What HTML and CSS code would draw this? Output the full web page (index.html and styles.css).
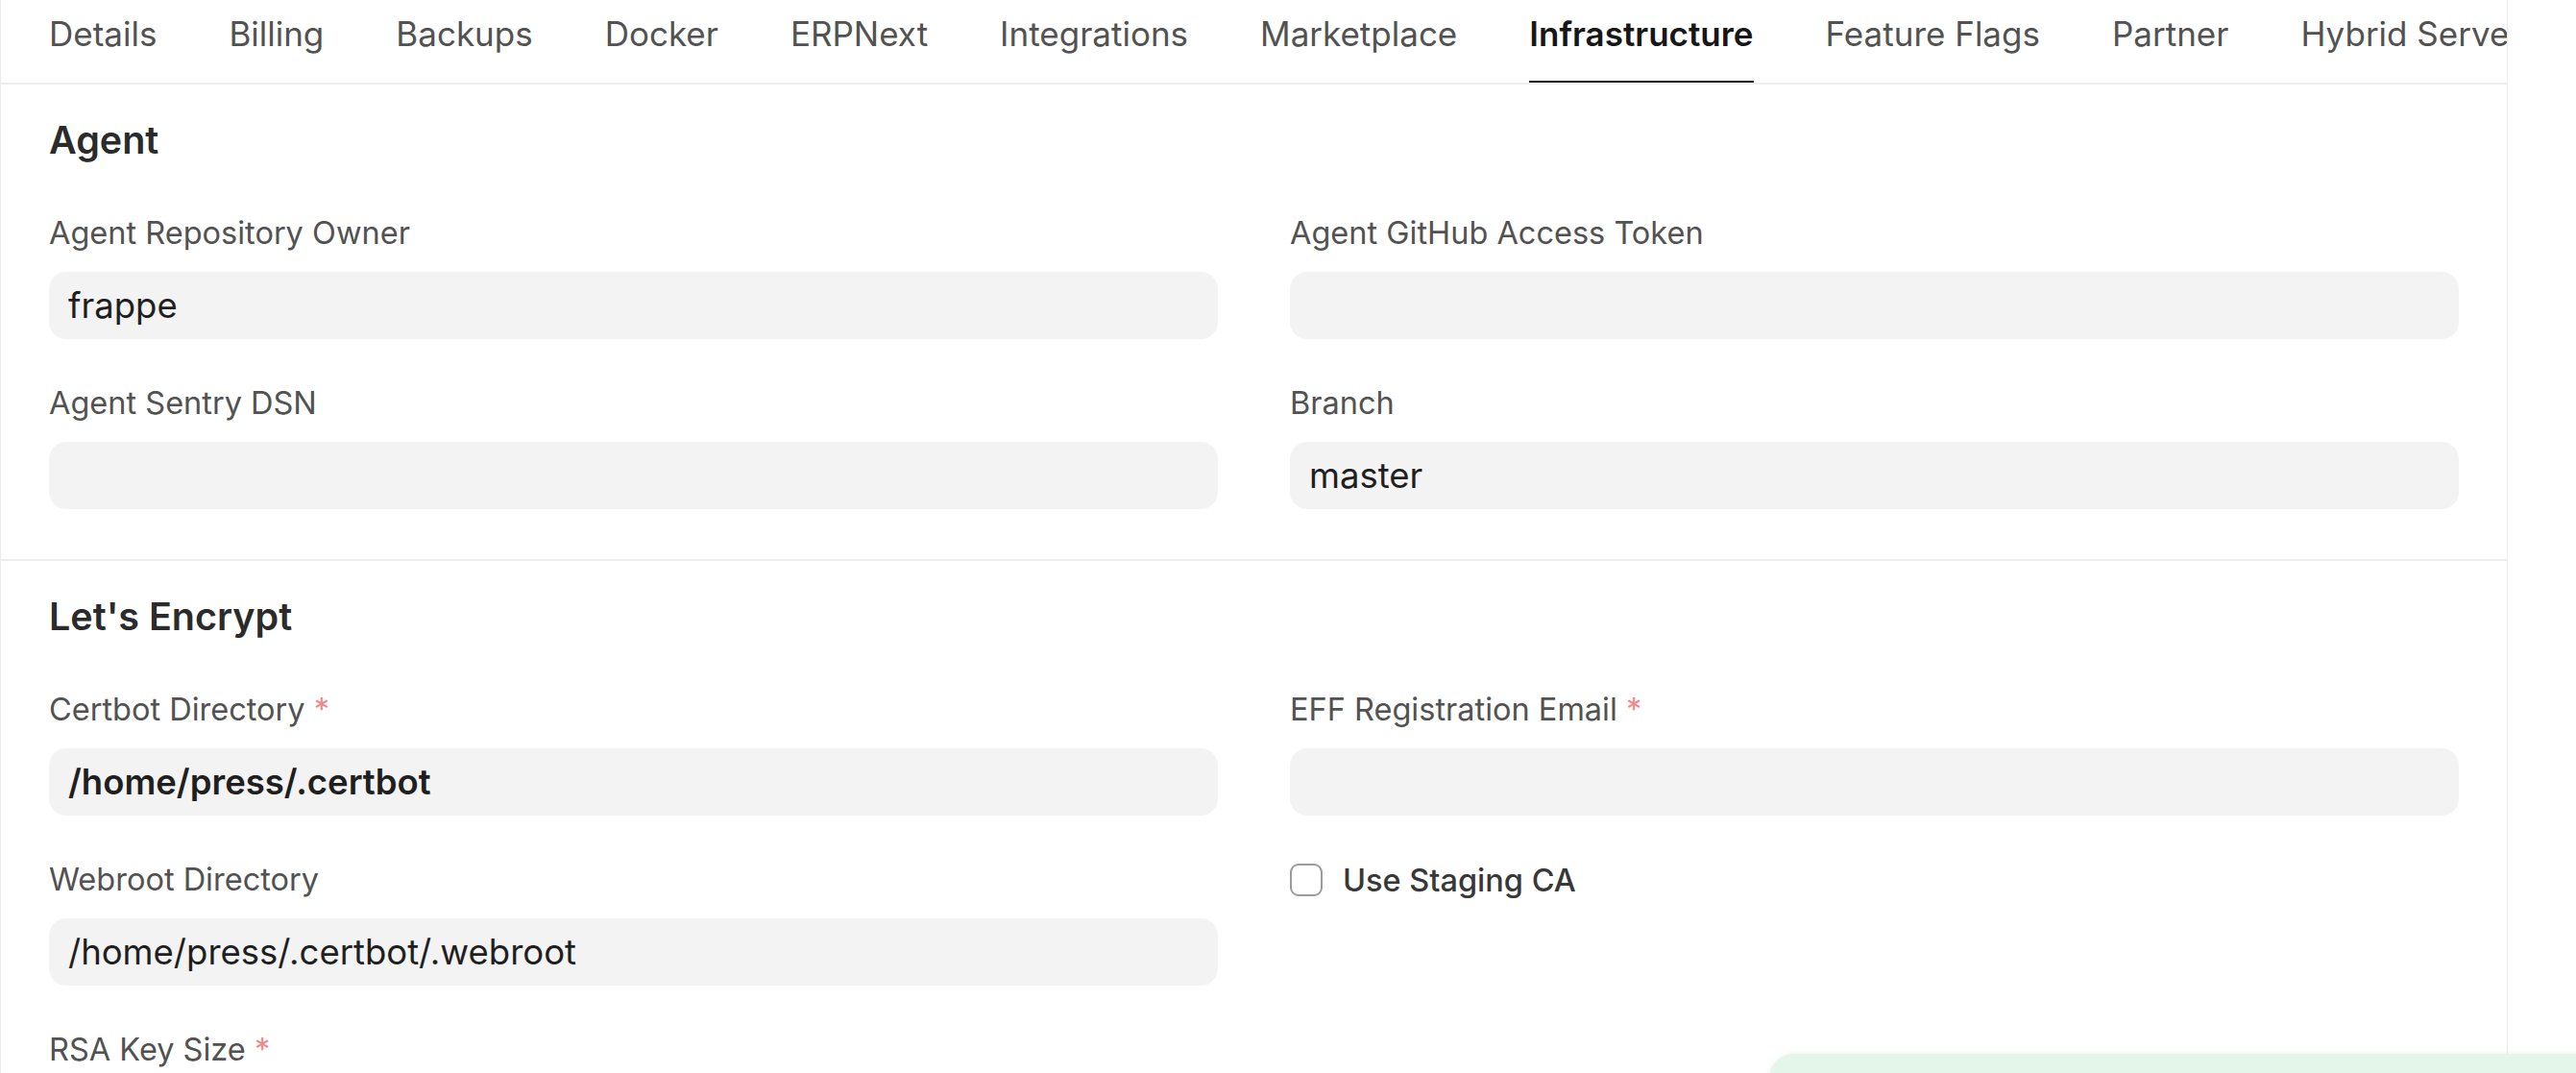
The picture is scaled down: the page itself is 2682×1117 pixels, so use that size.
FILE: index.html
```html
<!DOCTYPE html>
<html lang="en">
<head>
    <meta charset="UTF-8">
    <meta name="viewport" content="width=device-width, initial-scale=1.0">
    <title>Press Settings</title>
    <link rel="stylesheet" href="styles.css">
</head>
<body>

    <div class="form-page">
        <ul class="form-tabs">
            <li class="tab">Details</li>
            <li class="tab">Billing</li>
            <li class="tab">Backups</li>
            <li class="tab">Docker</li>
            <li class="tab">ERPNext</li>
            <li class="tab">Integrations</li>
            <li class="tab">Marketplace</li>
            <li class="tab active">Infrastructure</li>
            <li class="tab">Feature Flags</li>
            <li class="tab">Partner</li>
            <li class="tab">Hybrid Server</li>
        </ul>

        <section class="form-section">
            <h3 class="section-head">Agent</h3>
            <div class="section-body">
                <div class="form-column">
                    <div class="form-group">
                        <label class="control-label">Agent Repository Owner</label>
                        <input type="text" class="control-input" value="frappe" readonly>
                    </div>
                    <div class="form-group">
                        <label class="control-label">Agent Sentry DSN</label>
                        <input type="text" class="control-input" value="" readonly>
                    </div>
                </div>
                <div class="form-column">
                    <div class="form-group">
                        <label class="control-label">Agent GitHub Access Token</label>
                        <input type="password" class="control-input" value="" readonly>
                    </div>
                    <div class="form-group">
                        <label class="control-label">Branch</label>
                        <input type="text" class="control-input" value="master" readonly>
                    </div>
                </div>
            </div>
        </section>

        <section class="form-section">
            <h3 class="section-head">Let's Encrypt</h3>
            <div class="section-body">
                <div class="form-column">
                    <div class="form-group">
                        <label class="control-label reqd">Certbot Directory</label>
                        <input type="text" class="control-input bold" value="/home/press/.certbot" readonly>
                    </div>
                    <div class="form-group">
                        <label class="control-label">Webroot Directory</label>
                        <input type="text" class="control-input" value="/home/press/.certbot/.webroot" readonly>
                    </div>
                    <div class="form-group">
                        <label class="control-label reqd">RSA Key Size</label>
                        <input type="text" class="control-input" value="4096" readonly>
                    </div>
                </div>
                <div class="form-column">
                    <div class="form-group">
                        <label class="control-label reqd">EFF Registration Email</label>
                        <input type="text" class="control-input" value="" readonly>
                    </div>
                    <div class="form-group checkbox-group">
                        <label class="checkbox">
                            <input type="checkbox">
                            <span class="checkbox-label">Use Staging CA</span>
                        </label>
                    </div>
                </div>
            </div>
        </section>
    </div>

    <!-- toast sliding in from the corner -->
    <div class="toast"></div>

</body>
</html>
```

FILE: styles.css
```css
html,
body {
    margin: 0;
    height: 100%;
    overflow: hidden;
    background-color: #ffffff;
    font-family: Inter, "Noto Sans", sans-serif;
    color: #171717;
}

.form-page {
    width: 2611px;
    height: 100vh;
    box-sizing: border-box;
    border-left: 1px solid #ececec;
    border-right: 1px solid #ececec;
    overflow: hidden;
}

/* tabs */
.form-tabs {
    display: flex;
    gap: 75px;
    margin: 0;
    padding: 0 0 0 50px;
    list-style: none;
    white-space: nowrap;
    overflow: hidden;
    border-bottom: 2px solid #ededed;
}

.tab {
    padding: 15px 0 29px;
    line-height: 40px;
    font-size: 35px;
    color: #525252;
    border-bottom: 2px solid transparent;
}

.tab.active {
    color: #171717;
    font-weight: 600;
    border-bottom-color: #171717;
}

/* sections */
.form-section {
    padding: 34px 50px 5px;
    border-bottom: 2px solid #ededed;
}

.section-head {
    margin: 0 0 53px;
    font-size: 39.5px;
    line-height: 48px;
    font-weight: 600;
    color: #2b2b2b;
}

.section-body {
    display: grid;
    grid-template-columns: 1fr 1fr;
    column-gap: 75px;
}

.form-group {
    margin-bottom: 47px;
}

.control-label {
    display: block;
    margin-bottom: 20px;
    font-size: 32.5px;
    line-height: 40px;
    color: #525252;
}

.control-label.reqd::after {
    content: " *";
    color: #ef8a8a;
}

.control-input {
    display: block;
    width: 100%;
    height: 70px;
    box-sizing: border-box;
    padding: 0 20px;
    border: none;
    border-radius: 18px;
    outline: none;
    background-color: #f3f3f3;
    font-family: inherit;
    font-size: 36.5px;
    color: #1f1f1f;
}

.control-input.bold {
    font-weight: 600;
}

/* checkbox */
.checkbox {
    display: flex;
    align-items: center;
    gap: 21px;
    height: 40px;
}

.checkbox input {
    appearance: none;
    margin: 0;
    width: 34px;
    height: 34px;
    box-sizing: border-box;
    border: 2.5px solid #9c9c9c;
    border-radius: 9px;
    background: #ffffff;
}

.checkbox-label {
    font-size: 32.5px;
    font-weight: 500;
    color: #383838;
}

.toast {
    position: fixed;
    left: 1842px;
    top: 1097px;
    width: 1000px;
    height: 200px;
    border-radius: 26px;
    background-color: #e4f5e9;
    box-shadow: 0 0 6px rgba(0, 0, 0, 0.08);
}
```
